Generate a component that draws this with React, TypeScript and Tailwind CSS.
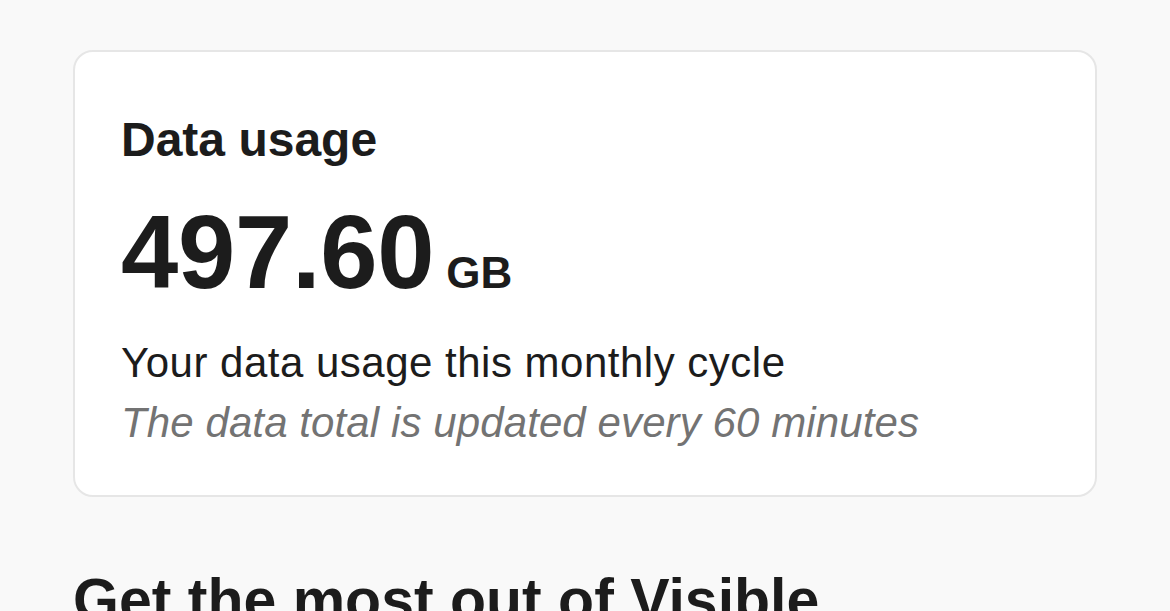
export default function App() {
  return (
    <div
      className="min-h-[611px] w-full overflow-hidden bg-[#f9f9f9] text-[#1c1c1c]"
      style={{ fontFamily: '"Liberation Sans", Arial, sans-serif' }}
    >
      <div className="px-[73px] pt-[50px]">
        {/* Data usage card */}
        <div className="w-[1024px] rounded-[20px] border-2 border-[#e6e6e6] bg-white pl-[46px] pr-10 pt-16 pb-[42px]">
          <h2 className="text-[48px] font-bold leading-[48px]">Data usage</h2>
          <div className="mt-[37px] flex items-baseline gap-[12px]">
            <span className="text-[103px] font-bold leading-[104px] tracking-[-0.3px]">497.60</span>
            <span className="text-[44px] font-bold leading-[44px]">GB</span>
          </div>
          <p className="mt-[28px] text-[42px] leading-[60px] tracking-[0.5px]">
            Your data usage this monthly cycle
          </p>
          <p className="text-[42px] italic leading-[60px] tracking-[0.1px] text-[#737373]">
            The data total is updated every 60 minutes
          </p>
        </div>

        <h2 className="mt-[74px] text-[59px] font-bold leading-[59px]">Get the most out of Visible</h2>
      </div>
    </div>
  )
}
